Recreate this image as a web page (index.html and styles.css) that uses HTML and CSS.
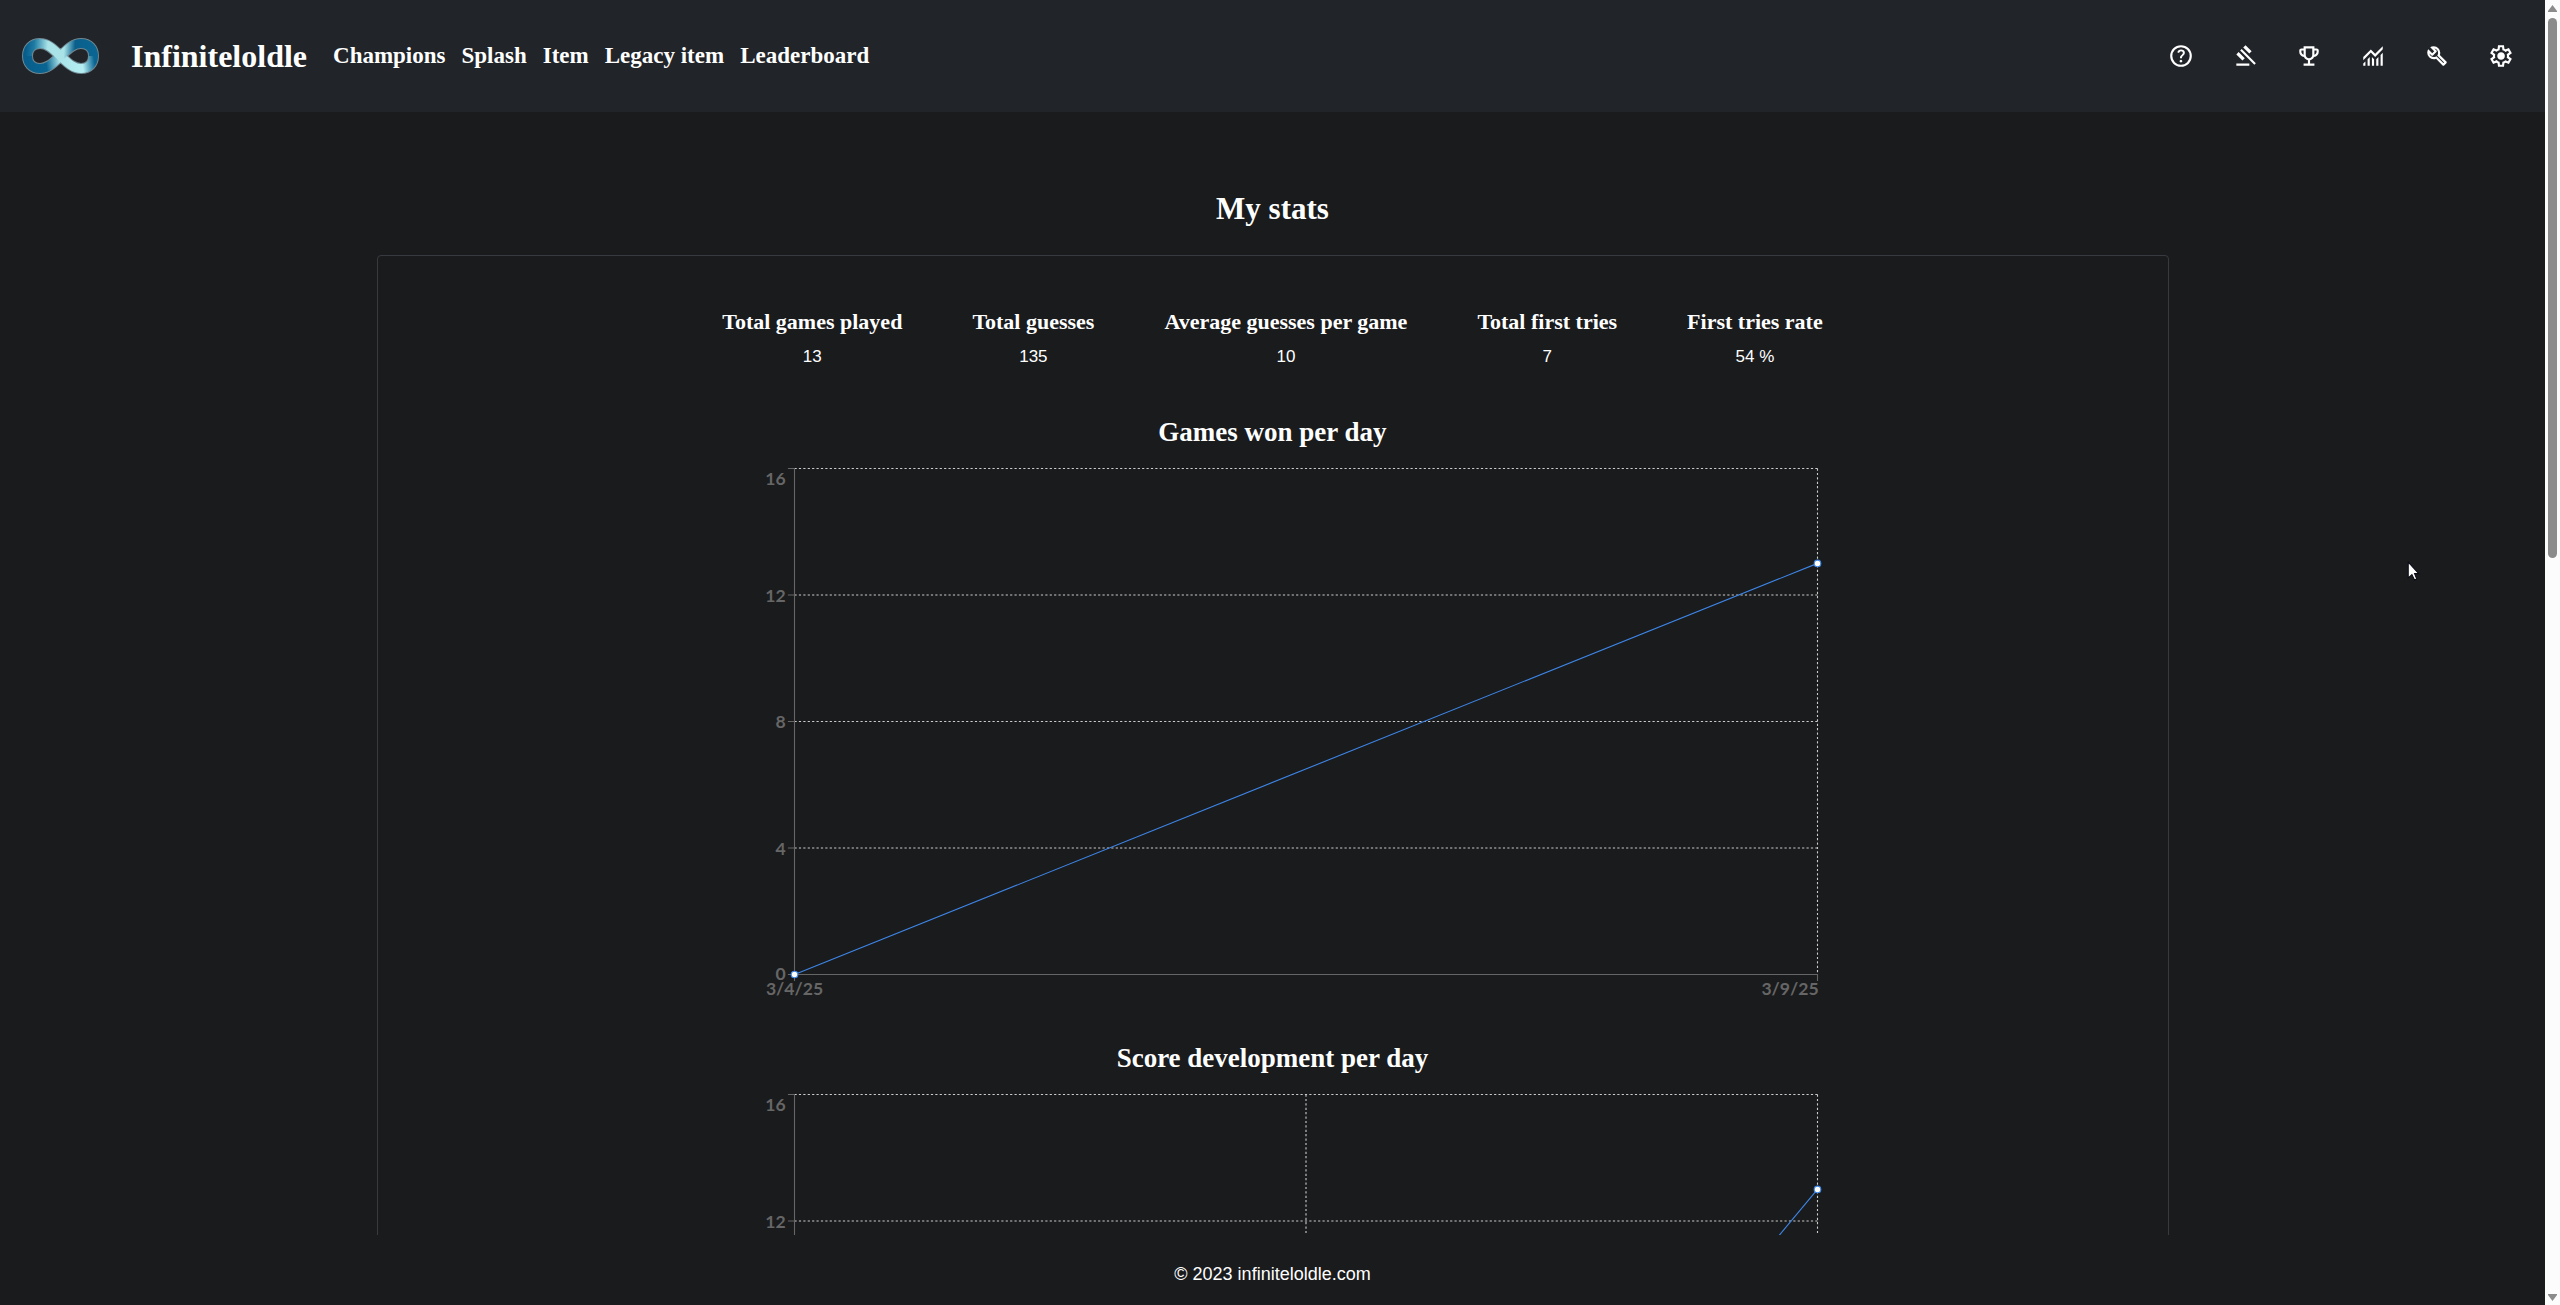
FILE: index.html
```html
<!DOCTYPE html>
<html lang="en">
<head>
<meta charset="utf-8">
<title>Infiniteloldle - My stats</title>
<link rel="stylesheet" href="styles.css">
</head>
<body>
<div class="app">
  <header class="header">
    <a class="logo" href="#" aria-label="Infiniteloldle home">
      <svg viewBox="0 0 77 36" width="77" height="36" fill="none" aria-hidden="true">
        <defs>
          <linearGradient id="down" gradientUnits="userSpaceOnUse" x1="4" y1="30" x2="72" y2="20">
            <stop offset="0" stop-color="#075e8c"/><stop offset=".3" stop-color="#0a6592"/><stop offset=".5" stop-color="#a9e3e8"/><stop offset=".82" stop-color="#b5eef2"/><stop offset="1" stop-color="#0a6592"/>
          </linearGradient>
          <linearGradient id="up" gradientUnits="userSpaceOnUse" x1="4" y1="8" x2="72" y2="12">
            <stop offset="0" stop-color="#075e8c"/><stop offset=".12" stop-color="#1f7ba3"/><stop offset=".32" stop-color="#a9e3e8"/><stop offset=".56" stop-color="#a9e3e8"/><stop offset=".72" stop-color="#0a5f8b"/><stop offset="1" stop-color="#0a6592"/>
          </linearGradient>
        </defs>
        <path stroke="#6f8790" stroke-width="11" d="M38.500 18C31 11 26 5.500 18 5.500C10 5.500 5.500 11 5.500 18S10 30.500 18 30.500C26 30.500 31 25 38.500 18C46 11 51 5.500 59 5.500C67 5.500 71.500 11 71.500 18S67 30.500 59 30.500C51 30.500 46 25 38.500 18Z"/>
        <g stroke-width="9">
          <path stroke="url(#down)" d="M5.500 18C5.500 25 10 30.500 18 30.500C26 30.500 31 25 38.500 18C46 25 51 30.500 59 30.500C67 30.500 71.500 25 71.500 18"/>
          <path stroke="url(#up)" d="M5.500 18C5.500 11 10 5.500 18 5.500C26 5.500 31 11 38.500 18C46 11 51 5.500 59 5.500C67 5.500 71.500 11 71.500 18"/>
        </g>
      </svg>
    </a>
    <a class="brand" href="#">Infiniteloldle</a>
    <nav class="nav">
      <a href="#">Champions</a>
      <a href="#">Splash</a>
      <a href="#">Item</a>
      <a href="#">Legacy item</a>
      <a href="#">Leaderboard</a>
    </nav>
    <div class="actions">
      <button type="button" aria-label="Help"><svg viewBox="0 -960 960 960"><path d="M478-240q21 0 35.500-14.500T528-290q0-21-14.500-35.500T478-340q-21 0-35.500 14.500T428-290q0 21 14.500 35.500T478-240Zm-36-154h74q0-33 7.500-52t42.500-52q26-26 41-49.500t15-56.500q0-56-41-86t-97-30q-57 0-92.500 30T342-618l66 26q5-18 22.500-39t53.500-21q32 0 48 17.500t16 38.500q0 20-12 37.500T506-526q-44 39-54 59t-10 73Zm38 314q-83 0-156-31.500T197-197q-54-54-85.500-127T80-480q0-83 31.500-156T197-763q54-54 127-85.500T480-880q83 0 156 31.500T763-763q54 54 85.500 127T880-480q0 83-31.500 156T763-197q-54 54-127 85.500T480-80Zm0-80q134 0 227-93t93-227q0-134-93-227t-227-93q-134 0-227 93t-93 227q0 134 93 227t227 93Z"/></svg></button>
      <button type="button" aria-label="Rules"><svg viewBox="0 -960 960 960"><path d="M160-120v-80h480v80H160Zm226-194L160-540l84-86 228 226-86 86Zm254-254L414-796l86-84 226 226-86 86Zm184 408L302-682l56-56 522 522-56 56Z"/></svg></button>
      <button type="button" aria-label="Achievements"><svg viewBox="0 -960 960 960"><path d="M280-120v-80h160v-124q-49-11-87.500-41.500T296-442q-75-9-125.500-65.500T120-640v-40q0-33 23.500-56.500T200-760h80v-80h400v80h80q33 0 56.500 23.500T840-680v40q0 76-50.500 132.500T664-442q-18 46-56.500 76.500T520-324v124h160v80H280Zm0-408v-152h-80v40q0 38 22 68.500t58 43.500Zm200 128q50 0 85-35t35-85v-240H360v240q0 50 35 85t85 35Zm200-128q36-13 58-43.500t22-68.500v-40h-80v152Z"/></svg></button>
      <button type="button" aria-label="Stats"><svg viewBox="0 -960 960 960"><path d="M120-120v-80l80-80v160h-80Zm160 0v-240l80-80v320h-80Zm160 0v-320l80 81v239h-80Zm160 0v-239l80-80v319h-80Zm160 0v-400l80-80v480h-80ZM120-327v-113l280-280 160 160 280-280v113L560-447 400-607 120-327Z"/></svg></button>
      <button type="button" aria-label="Tools"><svg viewBox="0 -960 960 960"><path d="M686-132 444-376q-20 8-40.500 12t-43.500 4q-100 0-170-70t-70-170q0-36 10-68.500t28-61.500l146 146 72-72-146-146q29-18 61.500-28t68.500-10q100 0 170 70t70 170q0 23-4 43.500T584-516l244 242q12 12 12 29t-12 29l-84 84q-12 12-29 12t-29-12Zm29-85 27-27-256-256q18-20 26-46.500t8-53.500q0-60-38.500-104.500T386-758l74 74q12 12 12 28t-12 28L332-500q-12 12-28 12t-28-12l-74-74q9 57 53.500 95.500T360-440q26 0 52-8t47-25l256 256Z"/></svg></button>
      <button type="button" aria-label="Settings"><svg viewBox="0 -960 960 960"><path d="m370-80-16-128q-13-5-24.500-12T307-235l-119 50L78-375l103-78q-1-7-1-13.500v-27q0-6.500 1-13.500L78-585l110-190 119 50q11-8 23-15t24-12l16-128h220l16 128q13 5 24.500 12t22.500 15l119-50 110 190-103 78q1 7 1 13.500v27q0 6.500-2 13.500l103 78-110 190-118-50q-11 8-23 15t-24 12L590-80H370Zm70-80h79l14-106q31-8 57.500-23.500T639-327l99 41 39-68-86-65q5-14 7-29.500t2-31.500q0-16-2-31.500t-7-29.500l86-65-39-68-99 42q-22-23-48.500-38.500T533-694l-13-106h-79l-14 106q-31 8-57.500 23.500T321-633l-99-41-39 68 86 64q-5 15-7 30t-2 32q0 16 2 31t7 30l-86 65 39 68 99-42q22 23 48.500 38.500T427-266l13 106Zm42-180q58 0 99-41t41-99q0-58-41-99t-99-41q-59 0-99.500 41T342-480q0 58 40.500 99t99.500 41Z"/></svg></button>
    </div>
  </header>

  <main class="main">
    <h1 class="title">My stats</h1>
    <section class="panel">
      <dl class="stats">
        <div><dt>Total games played</dt><dd>13</dd></div>
        <div><dt>Total guesses</dt><dd>135</dd></div>
        <div><dt>Average guesses per game</dt><dd>10</dd></div>
        <div><dt>Total first tries</dt><dd>7</dd></div>
        <div><dt>First tries rate</dt><dd>54 %</dd></div>
      </dl>

      <h2 class="chart-title">Games won per day</h2>
      <svg class="chart" viewBox="0 0 1000 500" role="img" aria-label="Games won per day">
        <path class="grid" d="M65 5H995M65 120H995M65 235H995M65 350H995M995 5V465"/>
        <path class="axis" d="M65 5V471M65 465H995V471M59 5H65M59 120H65M59 235H65M59 350H65M59 465H65"/>
        <g class="ticks ticks-y">
          <text x="57" y="20">16</text><text x="57" y="126">12</text><text x="57" y="241">8</text><text x="57" y="356">4</text><text x="57" y="470">0</text>
        </g>
        <g class="ticks"><text x="65" y="484">3/4/25</text><text class="last" x="996" y="484">3/9/25</text></g>
        <path class="line" d="M65 465L995 91.250"/>
        <circle class="dot" cx="65" cy="465" r="3"/><circle class="dot" cx="995" cy="91.250" r="3"/>
      </svg>

      <h2 class="chart-title">Score development per day</h2>
      <svg class="chart" viewBox="0 0 1000 500" role="img" aria-label="Score development per day">
        <path class="grid" d="M65 5H995M65 120H995M65 235H995M65 350H995M530 5V465M995 5V465"/>
        <path class="axis" d="M65 5V471M65 465H995V471M59 5H65M59 120H65M59 235H65M59 350H65M59 465H65"/>
        <g class="ticks ticks-y">
          <text x="57" y="20">16</text><text x="57" y="126">12</text>
        </g>
        <path class="line" d="M65 465H530C685 465 840 278 995 91.250"/>
        <circle class="dot" cx="995" cy="91.250" r="3"/>
      </svg>
    </section>
  </main>

  <footer class="footer">© 2023 infiniteloldle.com</footer>
</div>
<div class="scrollbar" aria-hidden="true">
  <svg viewBox="0 0 9 7" width="9" height="7"><path d="M4.500 0L9 6V7H0V6Z"/></svg>
  <div class="track"><div class="thumb"></div></div>
  <svg viewBox="0 0 9 7" width="9" height="7"><path d="M4.500 7L9 1V0H0V1Z"/></svg>
</div>
<svg class="cursor" viewBox="0 0 12 19" width="13" height="20" aria-hidden="true"><path d="M1 1V16L4.500 13L7 18L9 17L7 12H11Z" fill="#fff" stroke="#0b0b18"/></svg>
</body>
</html>
```
FILE: styles.css
```css
* { box-sizing: border-box; }

body {
  margin: 0;
  display: flex;
  height: 100vh;
  overflow: hidden;
  background: #1a1b1d;
  color: #fff;
  font-family: "Liberation Serif", "Times New Roman", serif;
}

a { color: inherit; text-decoration: none; }

.app { flex: 1; min-width: 0; display: flex; flex-direction: column; }

.header {
  flex: none;
  display: flex;
  align-items: center;
  height: 112px;
  padding: 0 31px 0 22px;
  background: #212429;
  font-weight: 700;
}

.logo svg { display: block; }
.brand { margin-left: 32px; font-size: 32px; line-height: 36px; }
.nav { display: flex; gap: 16px; margin-left: 26px; font-size: 23px; line-height: 26px; }

.actions { display: flex; gap: 38px; margin-left: auto; }
.actions button { padding: 0; border: 0; background: none; cursor: pointer; }
.actions svg { display: block; width: 26px; height: 26px; fill: #fff; }

.main { flex: 1; min-height: 0; overflow: hidden; padding: 79px 24px 0; }
.title { margin: 0 0 28px; font-size: 31px; line-height: 36px; text-align: center; }

.panel {
  display: flex;
  flex-direction: column;
  align-items: center;
  max-width: 1792px;
  margin: 0 auto;
  padding: 53px 24px;
  border: 1px solid #373a40;
  border-radius: 4px;
}

.stats { display: flex; flex-wrap: wrap; justify-content: center; gap: 70px; margin: 0 0 46px; text-align: center; }
.stats dt { font-size: 22px; line-height: 26px; font-weight: 700; }
.stats dd { margin: 9px 0 0; font: 17px/26px "Liberation Sans", Arial, sans-serif; }

.chart-title { margin: 0; padding-bottom: 15px; font-size: 27px; line-height: 32px; }
.chart { display: block; width: 100%; max-width: 1100px; margin-bottom: 29px; overflow: visible; }

.grid { fill: none; stroke: #ccc; stroke-dasharray: 2 2; }
.axis { fill: none; stroke: #666; }
.line { fill: none; stroke: #3d85e6; }
.dot { fill: #fff; stroke: #3d85e6; }
.ticks { fill: #666; font: 700 16px Lato, sans-serif; text-anchor: middle; }
.ticks-y, .ticks .last { text-anchor: end; }

.footer { flex: none; height: 70px; padding-top: 26px; font: 18px/26px "Liberation Sans", Arial, sans-serif; text-align: center; }

.scrollbar {
  flex: none;
  display: flex;
  flex-direction: column;
  align-items: center;
  gap: 6px;
  width: 15px;
  padding: 5px 0 4px;
  background: #fcfcfc;
}
.scrollbar svg { fill: #8b8b8b; }
.track { flex: 1; width: 9px; }
.thumb { height: 42.5%; border-radius: 5px; background: #8b8b8b; }

.cursor { position: absolute; left: 94%; top: 43%; margin-left: 1px; }
```
